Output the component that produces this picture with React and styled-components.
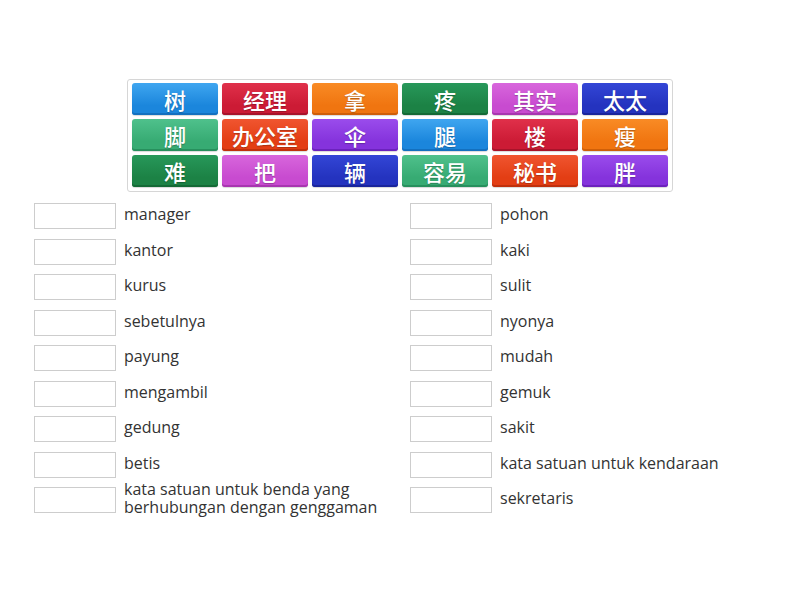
import React from "react";
import styled, { createGlobalStyle } from "styled-components";

const Global = createGlobalStyle`
  html, body { margin: 0; padding: 0; background: #fff; }
  body { font-family: "Open Sans", "Noto Sans CJK SC", sans-serif; }
`;

const Page = styled.div`
  width: 800px;
  height: 600px;
  padding-top: 79px;
  box-sizing: border-box;
`;

const Bank = styled.div`
  width: 546px;
  margin: 0 auto;
  box-sizing: border-box;
  border: 1px solid #d6d6d6;
  border-radius: 3px;
  padding: 3px 4px 4px;
  display: grid;
  grid-template-columns: repeat(6, 86px);
  grid-auto-rows: 32px;
  gap: 4px;
  background: #fff;
`;

const colors = {
  blue: ["#3fa6f0", "#1b86dc", "#1370bf"],
  red: ["#e0304a", "#cc1b35", "#a8132a"],
  orange: ["#f98b25", "#f07510", "#cf5f08"],
  green: ["#27985a", "#1c8245", "#146a36"],
  pink: ["#d866dc", "#c84bd0", "#a836b0"],
  navy: ["#3346d6", "#2433bf", "#1a259c"],
  mint: ["#4fc18c", "#37ab73", "#27905d"],
  redorange: ["#f05530", "#e33e14", "#c0300c"],
  purple: ["#9a4cec", "#8533dc", "#6c22bd"],
};

const Tile = styled.div`
  display: flex;
  align-items: center;
  justify-content: center;
  border-radius: 3px;
  color: #fff;
  font-family: "Noto Sans CJK SC", sans-serif;
  font-size: 22px;
  font-weight: 500;
  line-height: 1;
  text-shadow: 0 1px 1px rgba(0, 0, 0, 0.25);
  background: linear-gradient(
    to bottom,
    ${(p) => colors[p.$c][0]} 0%,
    ${(p) => colors[p.$c][1]} 70%,
    ${(p) => colors[p.$c][1]} 100%
  );
  box-shadow: inset 0 -2px 0 ${(p) => colors[p.$c][2]},
    0 1px 1px rgba(0, 0, 0, 0.15);
`;

const Columns = styled.div`
  display: grid;
  grid-template-columns: 376px 376px;
  padding-left: 34px;
  margin-top: 11px;
`;

const Column = styled.div`
  display: flex;
  flex-direction: column;
  gap: 9.5px;
`;

const Row = styled.div`
  display: flex;
  align-items: center;
  height: 26px;
`;

const Box = styled.div`
  flex: none;
  width: 82px;
  height: 26px;
  box-sizing: border-box;
  border: 1px solid #cdcdcd;
  background: #fff;
`;

const Label = styled.div`
  margin-left: 8px;
  font-family: "Open Sans", sans-serif;
  font-size: 16px;
  line-height: 18px;
  color: #333;
  margin-top: -4px;
  max-width: 270px;
`;

const tiles = [
  ["树", "blue"], ["经理", "red"], ["拿", "orange"], ["疼", "green"], ["其实", "pink"], ["太太", "navy"],
  ["脚", "mint"], ["办公室", "redorange"], ["伞", "purple"], ["腿", "blue"], ["楼", "red"], ["瘦", "orange"],
  ["难", "green"], ["把", "pink"], ["辆", "navy"], ["容易", "mint"], ["秘书", "redorange"], ["胖", "purple"],
];

const left = [
  "manager", "kantor", "kurus", "sebetulnya", "payung", "mengambil", "gedung", "betis",
  "kata satuan untuk benda yang berhubungan dengan genggaman",
];
const right = [
  "pohon", "kaki", "sulit", "nyonya", "mudah", "gemuk", "sakit",
  "kata satuan untuk kendaraan", "sekretaris",
];

export default function App() {
  return (
    <Page>
      <Global />
      <Bank>
        {tiles.map(([t, c], i) => (
          <Tile key={i} $c={c}>{t}</Tile>
        ))}
      </Bank>
      <Columns>
        <Column>
          {left.map((t, i) => (
            <Row key={i}>
              <Box />
              <Label>{t}</Label>
            </Row>
          ))}
        </Column>
        <Column>
          {right.map((t, i) => (
            <Row key={i}>
              <Box />
              <Label>{t}</Label>
            </Row>
          ))}
        </Column>
      </Columns>
    </Page>
  );
}
